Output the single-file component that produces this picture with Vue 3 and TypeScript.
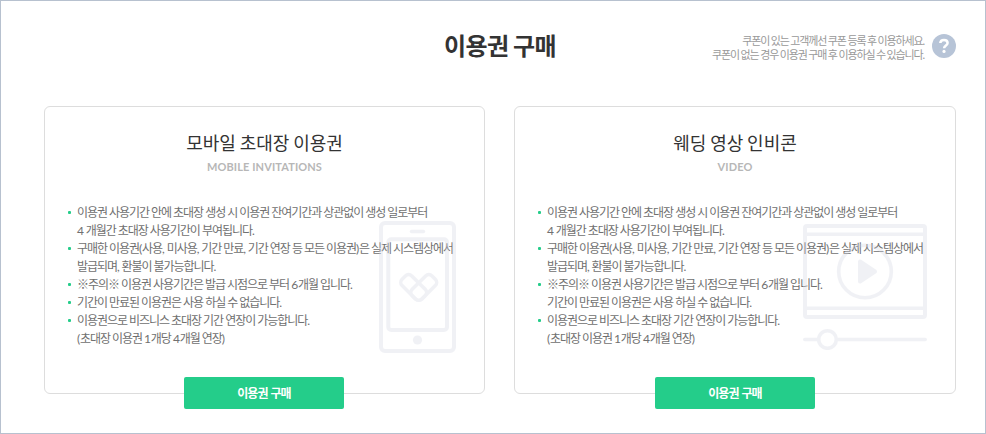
<script setup lang="ts">
interface Ticket {
  id: 'mobile' | 'video'
  title: string
  subtitle: string
  notes: string[][]
}

const period = [
  '이용권 사용기간 안에 초대장 생성 시 이용권 잔여기간과 상관없이 생성 일로부터',
  '4 개월간 초대장 사용기간이 부여됩니다.',
]
const refund = [
  '구매한 이용권(사용, 미사용, 기간 만료, 기간 연장 등 모든 이용권)은 실제 시스템상에서',
  '발급되며, 환불이 불가능합니다.',
]
const caution = '※주의※ 이용권 사용기간은 발급 시점으로 부터 6개월 입니다.'
const expired = '기간이 만료된 이용권은 사용 하실 수 없습니다.'
const extension = [
  '이용권으로 비즈니스 초대장 기간 연장이 가능합니다.',
  '(초대장 이용권 1개당 4개월 연장)',
]

const tickets: Ticket[] = [
  {
    id: 'mobile',
    title: '모바일 초대장 이용권',
    subtitle: 'MOBILE INVITATIONS',
    notes: [period, refund, [caution], [expired], extension],
  },
  {
    id: 'video',
    title: '웨딩 영상 인비콘',
    subtitle: 'VIDEO',
    notes: [period, refund, [caution, expired], extension],
  },
]

// Digits and brackets are tracked less tightly than Hangul.
const runs = (line: string): string[] => line.split(/([(),\d]+)/).filter(Boolean)
const isLatin = (run: string): boolean => /^[(),\d]/.test(run)
</script>

<template>
  <main class="page">
    <header class="header">
      <h1 class="title">이용권 구매</h1>
      <div class="help">
        <p class="help-text">쿠폰이 있는 고객께선 쿠폰 등록 후 이용하세요.<br />쿠폰이 없는 경우 이용권 구매 후 이용하실 수 있습니다.</p>
        <svg class="help-icon" viewBox="0 0 24 24">
          <circle cx="12" cy="12" r="12" fill="#b7c4d7" />
          <path d="M8.3 9C8.4 7 10 5.9 12 5.9s3.6 1.1 3.6 3.1c0 2.4-3.5 2.6-3.5 5.3" fill="none" stroke="#fff" stroke-width="2.5" />
          <circle cx="12" cy="17.4" r="1.6" fill="#fff" />
        </svg>
      </div>
    </header>

    <div class="cards">
      <section v-for="ticket in tickets" :key="ticket.id" class="card">
        <h2 class="card-title">{{ ticket.title }}</h2>
        <p class="card-subtitle">{{ ticket.subtitle }}</p>

        <ul class="notes">
          <li v-for="(note, i) in ticket.notes" :key="i" class="note">
            <span v-for="line in note" :key="line" class="line"><span v-for="(run, r) in runs(line)" :key="r" :class="{ latin: isLatin(run) }">{{ run }}</span></span>
          </li>
        </ul>

        <svg v-if="ticket.id === 'mobile'" class="art art-mobile" viewBox="0 0 77 132" fill="none" stroke="#d0d3e1" stroke-width="4">
          <rect x="2" y="2" width="73" height="128" rx="4" />
          <rect x="9.3" y="18.3" width="58.7" height="90.7" rx="3" />
          <path d="M32.5 10.5h12" stroke-width="3.4" stroke-linecap="round" />
          <circle cx="38.5" cy="119" r="4.6" fill="#d0d3e1" stroke="none" />
          <g stroke-width="3.5" transform="translate(39.7 81.2) rotate(45)">
            <rect x="-28" y="-13.7" width="28" height="13.7" rx="4.5" />
            <rect x="-13.7" y="-28" width="13.7" height="28" rx="4.5" />
          </g>
        </svg>
        <svg v-else class="art art-video" viewBox="0 0 124 126" fill="none" stroke="#d0d3e1" stroke-width="4">
          <rect x="2" y="2" width="120" height="91" rx="2" />
          <path d="M4 10.3h116M4 84.3h116" stroke-width="3.5" />
          <circle cx="62" cy="47.5" r="26.3" stroke-width="3.6" />
          <path d="M57 37.5v20L72 47.5z" fill="#d0d3e1" stroke-width="4" stroke-linejoin="round" />
          <path d="M1.8 115.5H15M34 115.5h88.2" stroke-width="3.6" stroke-linecap="round" />
          <circle cx="24.5" cy="115.5" r="8.8" stroke-width="3.6" />
        </svg>

        <button type="button" class="buy">이용권 구매</button>
      </section>
    </div>
  </main>
</template>

<style>
body {
  background: #fff;
}
</style>

<style scoped>
.page {
  box-sizing: border-box;
  width: 986px;
  height: 434px;
  padding: 0 29px 0 43px;
  border: 1px solid #b7c1cf;
  overflow: hidden;
  font-family: Lato, "Noto Sans CJK KR", sans-serif;
  color: #707070;
}
.header {
  display: grid;
  grid-template-columns: 1fr auto 1fr;
  height: 105px;
}
.title {
  grid-column: 2;
  margin: 27px 0 0;
  font-size: 24px;
  line-height: 36px;
  font-weight: 700;
  letter-spacing: -0.5px;
  word-spacing: -1px;
  color: #333;
}
.help {
  display: flex;
  justify-content: flex-end;
  gap: 8px;
  padding-top: 33px;
}
.help-text {
  margin: 0;
  font-size: 11px;
  line-height: 14px;
  letter-spacing: -1.13px;
  word-spacing: -0.1px;
  text-align: right;
  white-space: nowrap;
  color: #999;
}
.help-icon {
  width: 24px;
  height: 24px;
}
.cards {
  display: grid;
  grid-template-columns: 441px 442px;
  justify-content: space-between;
}
.card {
  position: relative;
  box-sizing: border-box;
  display: flex;
  flex-direction: column;
  align-items: center;
  height: 288px;
  padding-top: 22px;
  border: 1px solid #ddd;
  border-radius: 6px;
}
.card-title {
  margin: 0;
  font-size: 18px;
  line-height: 28px;
  font-weight: 400;
  word-spacing: -0.8px;
  color: #333;
}
.card-subtitle {
  margin: 2px 0 0;
  font-size: 11px;
  line-height: 16px;
  font-weight: 700;
  letter-spacing: 0.1px;
  color: #b7b7b7;
}
.art {
  position: absolute;
  opacity: 0.3;
  pointer-events: none;
}
.art-mobile {
  left: 334px;
  top: 114px;
  width: 77px;
  height: 132px;
}
.art-video {
  left: 288px;
  top: 117px;
  width: 124px;
  height: 126px;
}
.notes {
  align-self: stretch;
  margin: 29px 0 0;
  padding: 0 0 0 24px;
  list-style: none;
}
.note {
  position: relative;
  padding-left: 8px;
}
.note::before {
  content: "";
  position: absolute;
  left: -1px;
  top: 7px;
  width: 3px;
  height: 3px;
  border-radius: 1px;
  background: #24cd8a;
}
.line {
  display: block;
  font-size: 12px;
  line-height: 18px;
  letter-spacing: -1.04px;
  white-space: nowrap;
}
.latin {
  font-variant-numeric: lining-nums;
  letter-spacing: -0.2px;
}
.buy {
  position: relative;
  flex: none;
  width: 160px;
  height: 32px;
  margin: auto 0 -16px;
  padding: 0 0 2px;
  border: 0;
  border-radius: 2px;
  background: #24cd8a;
  font-family: inherit;
  font-size: 12px;
  font-weight: 700;
  letter-spacing: -0.9px;
  word-spacing: 0.8px;
  color: #fff;
}
.card:first-child .buy {
  margin-right: 1px;
}
</style>
